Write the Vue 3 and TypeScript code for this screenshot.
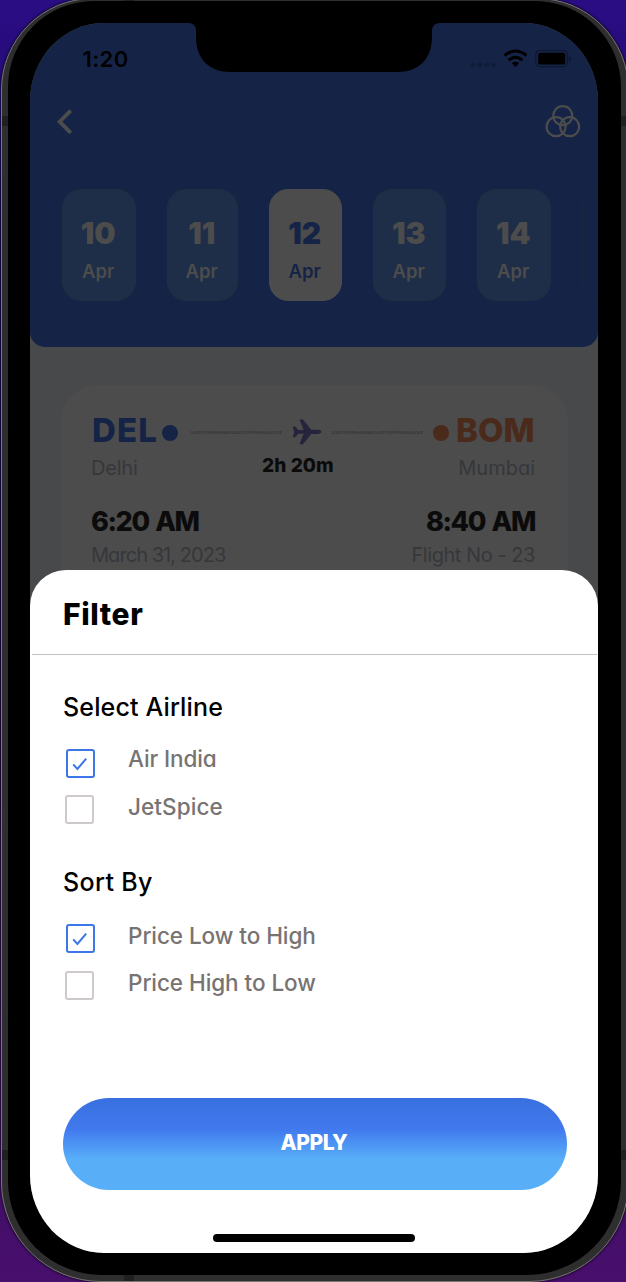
<script setup lang="ts">
interface DateItem {
  day: string
  month: string
  size: string
  selected?: boolean
}
interface Option {
  label: string
  checked: boolean
  key: string
}
interface Group {
  title: string
  key: string
  options: Option[]
}

const dates: DateItem[] = [
  { day: '10', month: 'Apr', size: 'wide' },
  { day: '11', month: 'Apr', size: 'narrow' },
  { day: '12', month: 'Apr', size: 'medium', selected: true },
  { day: '13', month: 'Apr', size: 'medium' },
  { day: '14', month: 'Apr', size: 'wide' },
]

const groups: Group[] = [
  {
    title: 'Select Airline',
    key: 'airline',
    options: [
      { label: 'Air India', checked: true, key: 'air' },
      { label: 'JetSpice', checked: false, key: 'jet' },
    ],
  },
  {
    title: 'Sort By',
    key: 'sort',
    options: [
      { label: 'Price Low to High', checked: true, key: 'low' },
      { label: 'Price High to Low', checked: false, key: 'high' },
    ],
  },
]
</script>

<template>
  <div class="stage">
    <div class="phone">
      <i class="band b1"></i><i class="band b2"></i><i class="band b3"></i><i class="band b4"></i>
      <i class="band b5"></i><i class="band b6"></i>
      <div class="bezel">
        <div class="screen">
          <svg class="notch" width="260" height="50" viewBox="0 0 260 50">
            <path d="M4 0H256Q248 0 248 8V14C248 36 235 49 213 49H47C25 49 12 36 12 14V8Q12 0 4 0Z" fill="#000" />
          </svg>
          <header class="header">
            <div class="status">
              <span class="time">1:20</span>
              <svg class="indicators" width="104" height="22" viewBox="0 0 104 22">
                <g fill="#101d38">
                  <circle cx="4" cy="16" r="2.3" /><circle cx="11" cy="16" r="2.3" />
                  <circle cx="17.7" cy="16" r="2.3" /><circle cx="24.3" cy="16" r="2.3" />
                </g>
                <g fill="none" stroke="#000" stroke-width="3">
                  <path d="M35.6 6.6Q46.5 -2.6 57.4 6.6" />
                  <path d="M39.6 11.2Q46.5 5.2 53.4 11.2" />
                </g>
                <path d="M42.8 14Q46.5 11 50.2 14L46.5 18Z" fill="#000" />
                <rect x="66.8" y="1.5" width="31.6" height="16.2" rx="4.2" fill="none" stroke="#0d1830" stroke-width="1.2" />
                <rect x="69.2" y="3.8" width="27" height="11.8" rx="2.2" fill="#000" />
                <path d="M99.8 7Q102 8 102 9.8T99.8 12.6Z" fill="#0d1830" />
              </svg>
            </div>
            <div class="nav">
              <svg width="20" height="28" viewBox="0 0 20 28">
                <path d="M14.7 2.6L3.7 13.7L14.7 24.8" fill="none" stroke="#4c4c4c" stroke-width="3.8" />
              </svg>
              <svg width="38" height="36" viewBox="0 0 38 36" fill="none" stroke="#4c4c4c" stroke-width="2.2">
                <circle cx="18.8" cy="11.7" r="9.5" />
                <circle cx="12.1" cy="22.7" r="9.5" />
                <circle cx="25.7" cy="22.7" r="9.5" />
              </svg>
            </div>
            <div class="dates">
              <div v-for="d in dates" :key="d.day" class="date" :class="[d.size, { selected: d.selected }]">
                <b>{{ d.day }}</b>
                <span>{{ d.month }}</span>
              </div>
              <div class="date next"></div>
            </div>
          </header>
          <section class="ticket">
            <div class="route">
              <b class="code from">DEL</b>
              <i class="dot from-dot"></i>
              <i class="dash"></i>
              <svg class="plane" width="30" height="26" viewBox="0 0 30 26">
                <path d="M.8 7.6H3.2L6.3 11H11.7L7.8 1.4C7.5 .7 7.8.4 8.5.4H11L19.2 10.8H25.4C27.7 10.8 29.4 11.7 29.4 12.8S27.7 14.9 25.4 14.9H19.2L11 25.3H8.5C7.8 25.3 7.5 25 7.8 24.3L11.7 14.8H6.3L3.2 18.2H.8L2.2 12.9Z" fill="#26243d" />
              </svg>
              <i class="dash"></i>
              <i class="dot to-dot"></i>
              <b class="code to">BOM</b>
            </div>
            <div class="cities">
              <span class="muted delhi">Delhi</span>
              <b class="duration">2h 20m</b>
              <span class="muted mumbai">Mumbai</span>
            </div>
            <div class="pair hours"><b>6:20 AM</b><b>8:40 AM</b></div>
            <div class="pair details">
              <span class="muted day">March 31, 2023</span>
              <span class="muted flight">Flight No - 23</span>
            </div>
          </section>
          <section class="sheet">
            <h1>Filter</h1>
            <div class="rule"></div>
            <div v-for="g in groups" :key="g.key" class="group" :class="g.key">
              <h2>{{ g.title }}</h2>
              <div v-for="o in g.options" :key="o.key" class="option" :class="o.key">
                <span class="box" :class="{ on: o.checked }">
                  <svg v-if="o.checked" width="16" height="14" viewBox="0 0 16 14">
                    <path d="M1.2 7.4L5.4 12L14.2 1.6" fill="none" stroke="#3d76e8" stroke-width="2" />
                  </svg>
                </span>
                <span class="label">{{ o.label }}</span>
              </div>
            </div>
            <button class="apply" type="button"><span>APPLY</span></button>
            <div class="home"></div>
          </section>
        </div>
      </div>
    </div>
  </div>
</template>

<style>
html,
body {
  margin: 0;
  overflow: hidden;
}
</style>

<style scoped>
* {
  box-sizing: border-box;
}
.stage {
  position: relative;
  width: 626px;
  height: 1282px;
  overflow: hidden;
  background: linear-gradient(180deg, #2a0d84 0, #1c0860 20%, #250a55 60%, #480f6c 100%);
  font-family: Inter, "Noto Sans", sans-serif;
  font-feature-settings: "cv11";
}
.phone {
  position: relative;
  width: 628px;
  height: 1284px;
  margin: -2px 0 0 1px;
  padding: 2px 7px 6px 6px;
  border-radius: 92px 92px 100px 100px;
  background: #2e2e2e;
  border: 1px solid #777;
  box-shadow: 0 0 3px #000;
  overflow: hidden;
}
.bezel {
  position: relative;
  width: 613px;
  height: 1274px;
  padding: 22px 23px 21px 22px;
  background: #000;
  border-radius: 86px 86px 94px 94px;
}
.band {
  position: absolute;
  background: #202020;
}
.b1 { left: 0; top: 117px; width: 8px; height: 10px; }
.b2 { right: 0; top: 117px; width: 8px; height: 10px; }
.b3 { left: 0; top: 1151px; width: 8px; height: 10px; }
.b4 { right: 0; top: 1151px; width: 8px; height: 10px; }
.b5 { left: 122px; top: 0; width: 10px; height: 3px; }
.b6 { left: 122px; bottom: 0; width: 10px; height: 7px; }
.screen {
  position: relative;
  width: 568px;
  height: 1230px;
  overflow: hidden;
  border-radius: 74px / 78px;
  background: #48494b;
}
.notch {
  position: absolute;
  left: 154px;
  top: 0;
}
.header {
  height: 324px;
  padding-top: 25px;
  background: #152446;
  border-radius: 0 0 15px 15px;
  overflow: hidden;
}
.status {
  display: flex;
  justify-content: space-between;
  height: 23px;
  padding: 0 25px 0 52.5px;
}
.time {
  font-size: 22px;
  font-weight: 600;
  line-height: 23px;
  letter-spacing: .4px;
  color: #000;
}
.indicators {
  margin-top: 1px;
}
.nav {
  display: flex;
  justify-content: space-between;
  align-items: flex-start;
  height: 36px;
  margin-top: 33px;
  padding: 3.5px 16px 0 26px;
}
.nav svg:last-child {
  margin-top: -3.5px;
}
.dates {
  display: flex;
  gap: 31px;
  width: 700px;
  margin: 49px 0 0 32px;
}
.date {
  height: 112px;
  padding: 26px 1.5px 0 0;
  border-radius: 19px;
  border: 1px solid #222d42;
  background: #1f2e48;
  color: #4c4c4c;
  display: flex;
  flex-direction: column;
  align-items: center;
}
.wide { width: 74px; }
.narrow { width: 71px; }
.medium { width: 73px; }
.next {
  background: transparent;
  width: 74px;
  border-color: #1a2842;
}
.date b {
  font-size: 30px;
  font-weight: 900;
  line-height: 34px;
}
.date span {
  margin-top: 10px;
  font-size: 18.5px;
  font-weight: 600;
  line-height: 22px;
}
.selected {
  background: #4c4c4c;
  border-color: #4c4c4c;
  color: #152446;
}
.ticket {
  width: 507px;
  height: 300px;
  margin: 38px 0 0 31px;
  padding: 27px 33px 0 30px;
  border-radius: 36px;
  background: #4c4c4c;
}
.route {
  display: flex;
  align-items: center;
  height: 38px;
  padding-left: 1px;
}
.code {
  font-size: 33px;
  font-weight: 800;
  line-height: 38px;
  margin-top: -3px;
  white-space: nowrap;
}
.from { width: 70px; color: #152446; letter-spacing: 1.2px; }
.to { margin-left: 7px; color: #4a2a1a; }
.dot {
  flex: none;
  width: 16px;
  height: 16px;
  margin-top: 4px;
  border-radius: 50%;
}
.from-dot { background: #152446; margin-right: 12px; }
.to-dot { background: #4a2a1a; margin-left: 10px; }
.dash {
  flex: none;
  width: 92px;
  height: 3px;
  margin-top: 3px;
  background: repeating-linear-gradient(125deg, #3c3c3e 0 1.2px, #474748 1.2px 2.4px);
}
.plane {
  flex: none;
  margin: 2px 9px 0 10px;
}
.cities {
  display: flex;
  justify-content: space-between;
  height: 24px;
  margin-top: 6px;
}
.muted {
  font-size: 20px;
  font-weight: 400;
  line-height: 24px;
  color: #36373b;
}
.delhi { letter-spacing: -.2px; }
.duration {
  font-size: 19px;
  font-weight: 800;
  line-height: 20px;
  letter-spacing: .1px;
  color: #0b0b0b;
}
.pair {
  display: flex;
  justify-content: space-between;
}
.hours {
  margin-top: 26px;
  font-size: 27px;
  line-height: 32px;
  color: #0b0b0b;
}
.hours b {
  font-weight: 800;
  letter-spacing: -1.4px;
  word-spacing: 2px;
}
.hours b:last-child { margin-right: 0; }
.details { margin-top: 5px; }
.day { letter-spacing: -.95px; word-spacing: 0; }
.flight { letter-spacing: -.45px; }
.sheet {
  position: absolute;
  left: 0;
  right: 0;
  top: 547px;
  height: 683px;
  border-radius: 36px 36px 0 0;
  background: #fff;
}
h1, h2 {
  margin: 0;
  color: #000;
}
h1 {
  padding: 26px 0 0 33px;
  font-size: 30px;
  font-weight: 800;
  line-height: 36px;
  letter-spacing: .6px;
}
.rule {
  height: 1px;
  margin: 22px 1px 0 2px;
  background: #c2c2c2;
}
.group { padding-left: 33px; }
h2 {
  font-size: 25px;
  font-weight: 500;
  line-height: 30px;
  letter-spacing: .15px;
}
.airline { padding-top: 37px; }
.sort { padding-top: 42px; }
.sort h2 { letter-spacing: .35px; }
.option {
  display: flex;
  align-items: flex-start;
  height: 30px;
}
.air { margin-top: 27px; }
.jet { margin-top: 16px; }
.low { margin-top: 27px; }
.high { margin-top: 17px; }
.box {
  display: grid;
  place-items: center;
  width: 29px;
  height: 29px;
  margin: 0 34.5px 0 1.5px;
  border: 2px solid #cfcaca;
  border-radius: 3px;
}
.box.on {
  margin: 0 33.5px 0 2.5px;
  border-color: #3d76e8;
}
.label {
  font-size: 22.5px;
  font-weight: 500;
  line-height: 28px;
  color: #787373;
}
.air .label { margin-top: -4px; letter-spacing: -.1px; }
.jet .label { margin-top: -2px; letter-spacing: .1px; }
.low .label { margin-top: -2px; letter-spacing: -.06px; }
.high .label { margin-top: -2px; letter-spacing: -.06px; }
.apply {
  display: block;
  width: 504px;
  height: 92px;
  margin: 97px 0 0 32.5px;
  padding: 0 1px 2px 0;
  border: 0;
  border-radius: 46px;
  background: linear-gradient(180deg, #3970df 0, #4179ee 34%, #58aff8 67%, #58aff8 100%);
  color: #fff;
  font: 800 21px/24px Inter, sans-serif;
  letter-spacing: -.4px;
}
.home {
  width: 202px;
  height: 8px;
  margin: 44px 0 0 183px;
  border-radius: 4px;
  background: #000;
}
</style>
